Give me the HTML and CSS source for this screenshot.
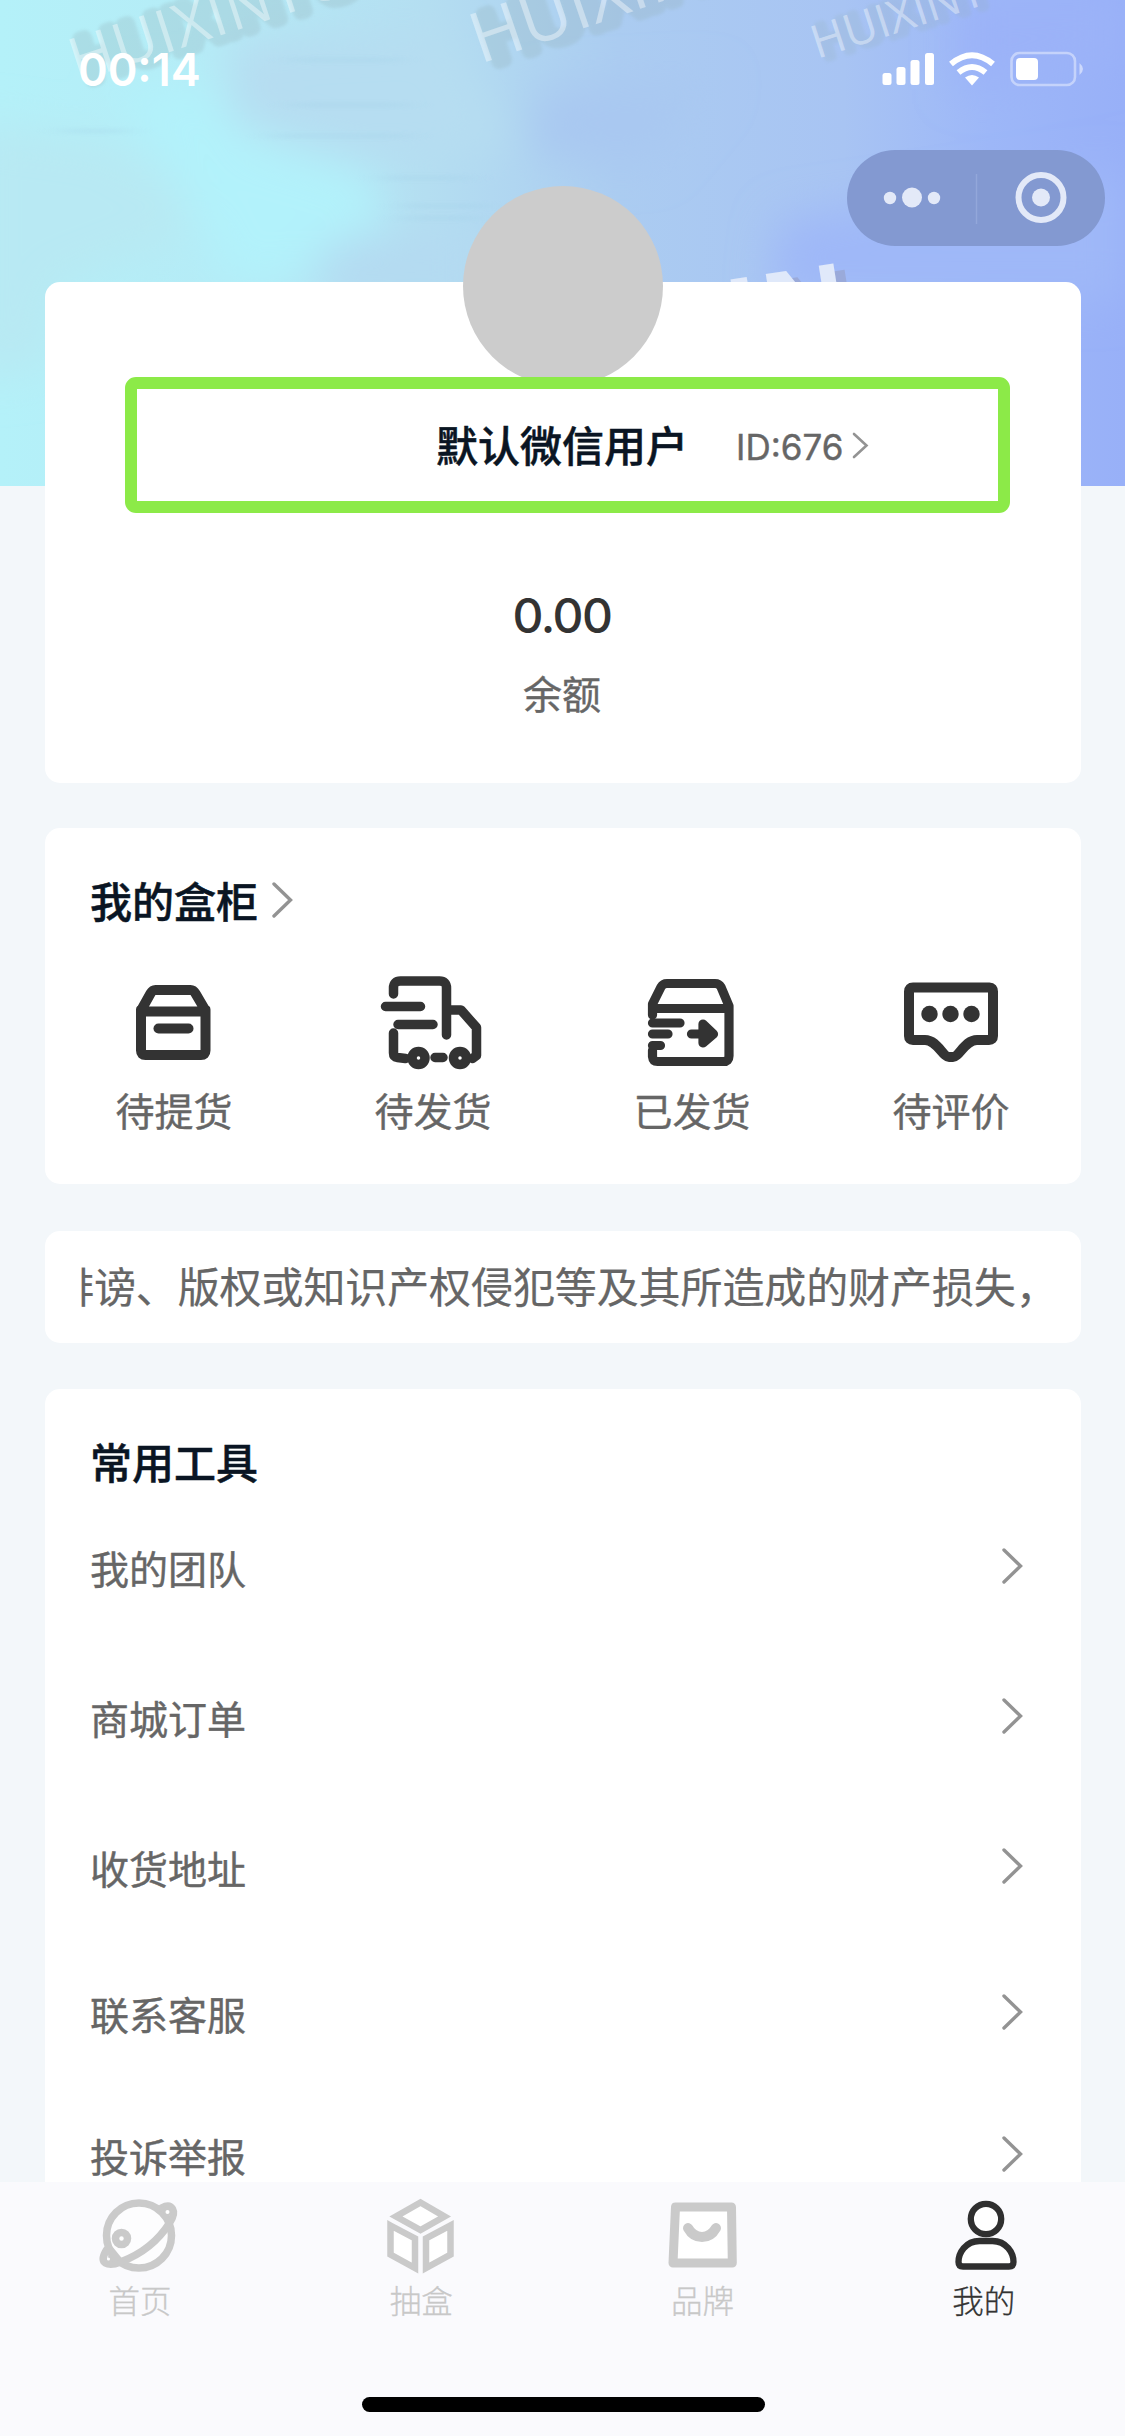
FILE: index.html
```html
<!DOCTYPE html>
<html lang="zh-CN">
<head>
<meta charset="utf-8">
<title>我的</title>
<link rel="stylesheet" href="styles.css">
</head>
<body>
<div class="page">
  <svg class="backdrop" viewBox="0 0 1125 486" aria-hidden="true">
    <defs>
      <linearGradient id="sky" x1="0" y1="0" x2="1" y2="0">
        <stop offset="0" stop-color="#b4f1f9"/>
        <stop offset=".2" stop-color="#b5ebf6"/>
        <stop offset=".38" stop-color="#b4def1"/>
        <stop offset=".55" stop-color="#abccf1"/>
        <stop offset=".75" stop-color="#a8c4f3"/>
        <stop offset=".88" stop-color="#9db7f8"/>
        <stop offset="1" stop-color="#98b0f8"/>
      </linearGradient>
      <filter id="soft" x="-50%" y="-50%" width="200%" height="200%"><feGaussianBlur stdDeviation="22"/></filter>
      <filter id="streak" x="-50%" y="-50%" width="200%" height="200%"><feGaussianBlur stdDeviation="14 2"/></filter>
      <filter id="shade" x="-20%" y="-40%" width="140%" height="180%"><feGaussianBlur stdDeviation="1.500"/></filter>
    </defs>
    <rect width="1125" height="486" fill="url(#sky)"/>
    <g filter="url(#soft)">
      <path d="M-30 120L110 140 190 190 190 240 60 290 50 370-30 380Z" fill="#b8e9f3"/>
      <path d="M110 90L210 80 250 140 370 175 385 220 320 280 230 290 180 190Z" fill="#b2f2fb"/>
      <path d="M230 40L440 30 520 150 370 160 230 120Z" fill="#b6ddf1"/>
      <path d="M310 260L350 235 480 235 480 300 330 300Z" fill="#b4daf1"/>
      <path d="M540 90L720 80 650 165 530 155Z" fill="#a9c8f1"/>
      <path d="M780 220L1125 170V300H770Z" fill="#9fb8f8"/>
      <path d="M960 0H1125V60L960 90Z" fill="#9bb2f8"/>
    </g>
    <g class="streaks" filter="url(#streak)">
      <path d="M60 131h70M270 136h140M290 60h110M290 105h120M380 178h90M400 206h90M400 218h80"/>
    </g>
    <g class="wordmark">
      <g transform="translate(77 82) rotate(-18)">
        <text class="depth" x="10" y="3" font-size="60" letter-spacing="1.500">HUIXINTC</text>
        <text x="0" y="0" font-size="60" letter-spacing="1.500">HUIXINTC</text>
      </g>
      <g transform="translate(480 64) rotate(-19)">
        <text class="depth" x="12" y="4" font-size="70">HUIXIN</text>
        <text x="0" y="0" font-size="70">HUIXIN</text>
      </g>
      <g transform="translate(817 59) rotate(-18)">
        <text class="depth thin" x="7" y="2" font-size="46">HUIXINT</text>
        <text x="0" y="0" font-size="46">HUIXINT</text>
      </g>
      <g class="front" transform="translate(855 338) rotate(-9)">
        <text class="front-depth" x="10" y="8" font-size="108">IN</text>
        <text x="0" y="0" font-size="108">IN</text>
      </g>
    </g>
  </svg>

  <header class="status">
    <time class="clock">00:14</time>
    <svg class="signals" viewBox="880 50 206 38" aria-hidden="true">
      <g fill="#fff">
        <rect x="882.5" y="73" width="9" height="12" rx="2.5"/>
        <rect x="896.5" y="67" width="9" height="18" rx="2.5"/>
        <rect x="910.5" y="60" width="9" height="25" rx="2.5"/>
        <rect x="925" y="53" width="9" height="32" rx="2.5"/>
        <path d="M972 85.500L965 77.500Q972 72.500 979 77.500Z"/>
      </g>
      <g fill="none" stroke="#fff" stroke-width="6">
        <path d="M951 64Q972 46.500 993 64"/>
        <path d="M958.500 72.500Q972 61.500 985.500 72.500"/>
      </g>
      <rect x="1011.500" y="53" width="63.500" height="32" rx="8" fill="none" stroke="#fff" stroke-opacity=".42" stroke-width="2.600"/>
      <rect x="1016" y="58" width="22" height="22" rx="4" fill="#fff"/>
      <path d="M1079.500 63Q1083 66 1083 69T1079.500 75Z" fill="#fff" opacity=".5"/>
    </svg>
  </header>

  <nav class="capsule-row">
    <div class="capsule">
      <svg viewBox="847 150 258 96" aria-hidden="true">
        <g fill="#e3e9f8"><circle cx="890" cy="198" r="6.200"/><circle cx="912" cy="197.500" r="10"/><circle cx="934" cy="198" r="6.200"/><circle cx="1041" cy="197.500" r="9"/></g>
        <circle cx="1041" cy="197.500" r="22.500" fill="none" stroke="#e3e9f8" stroke-width="6"/>
        <path d="M976.500 174v50" stroke="#93a7da" stroke-width="1.500"/>
      </svg>
    </div>
  </nav>

  <main class="content">
    <section class="card profile">
      <div class="avatar"></div>
      <div class="identity">
        <span class="name">默认微信用户</span>
        <span class="uid">ID:676</span>
        <svg class="chev chev-s" viewBox="0 0 17 27"><path d="M2 2l12.500 11.500L2 25"/></svg>
      </div>
      <div class="amount">0.00</div>
      <div class="amount-label">余额</div>
    </section>

    <section class="card cabinet">
      <h2 class="title">我的盒柜 <svg class="chev" viewBox="0 0 21 36"><path d="M2 2l16.500 16L2 34"/></svg></h2>
      <div class="shortcuts">
        <div class="shortcut">
          <svg viewBox="115 970 120 104"><g class="ink">
            <path d="M142 1009.500v41q0 4.500 4.500 4.500h55.500q4.500 0 4.500-4.500v-41M142 1011.500h64.500M142 1010.500l9.500-17q2-3.500 5-3.500h35q3 0 5 3.500l10 17"/>
            <path d="M159.500 1028.500h30"/></g></svg>
          <span>待提货</span>
        </div>
        <div class="shortcut">
          <svg viewBox="374 970 120 104"><g class="ink truck">
            <path d="M394.500 994v-6q0-7 7-7h39q7 0 7 7v47M386.500 1006.500h35M399 1024.500h35M394.500 1033v20q0 4 4 4.500l8 1M447.500 1010h14.500l15.500 17.500v28l-4 3M436 1057.500h8"/></g>
            <g class="wheel"><circle cx="419.500" cy="1058" r="6.500"/><circle cx="461" cy="1058" r="6.500"/></g></svg>
          <span>待发货</span>
        </div>
        <div class="shortcut">
          <svg viewBox="633 970 120 104"><g class="ink sent">
            <path d="M653.500 1015v-11l8.500-17q2-3.500 6-3.500h48q4 0 6 3.500l8 19v50q0 5.500-5.500 5.500h-66q-4.500 0-5-5v-6M653.500 1008.500h76"/>
            <path d="M653.500 1023h27.500M653.500 1034h15.500M653.500 1045.500h8M692.500 1034h15"/>
            <path d="M704 1024l10.500 10-10.500 9z" fill="#333"/></g></svg>
          <span>已发货</span>
        </div>
        <div class="shortcut">
          <svg viewBox="892 970 120 104"><g class="ink">
            <path d="M914 987.500H990.500Q994 987.500 994 991.500V1036Q994 1040 990 1040H978C966 1040 960 1057 954 1057H950C944 1057 938 1040 926 1040H914Q910 1040 910 1036V991.500Q910 987.500 914 987.500Z"/></g>
            <g fill="#333"><circle cx="930.500" cy="1014" r="8.200"/><circle cx="951.500" cy="1014" r="8.200"/><circle cx="972.500" cy="1014" r="8.200"/></g></svg>
          <span>待评价</span>
        </div>
      </div>
    </section>

    <section class="card notice">
      <div class="marquee"><span>诽谤、版权或知识产权侵犯等及其所造成的财产损失，</span></div>
    </section>

    <section class="card tools">
      <h2 class="title">常用工具</h2>
      <ul class="list">
        <li>我的团队<svg class="chev" viewBox="0 0 21 36"><path d="M2 2l16.500 16L2 34"/></svg></li>
        <li>商城订单<svg class="chev" viewBox="0 0 21 36"><path d="M2 2l16.500 16L2 34"/></svg></li>
        <li>收货地址<svg class="chev" viewBox="0 0 21 36"><path d="M2 2l16.500 16L2 34"/></svg></li>
        <li class="short">联系客服<svg class="chev" viewBox="0 0 21 36"><path d="M2 2l16.500 16L2 34"/></svg></li>
        <li class="short">投诉举报<svg class="chev" viewBox="0 0 21 36"><path d="M2 2l16.500 16L2 34"/></svg></li>
      </ul>
    </section>
  </main>

  <footer class="tabbar">
    <div class="tabs">
      <div class="tab">
        <svg viewBox="95.500 2194 90 84"><g fill="none" stroke="#cacaca" stroke-width="7.500" stroke-linecap="round" stroke-linejoin="round">
          <circle cx="139.500" cy="2235.500" r="32.500" fill="#fdfdfe"/>
          <path d="M162 2208q8-4 11 1t-3 14q-17 27-49 39-10 4-15 1t1-13"/></g>
          <circle cx="122" cy="2238.500" r="6" fill="#fff" stroke="#cacaca" stroke-width="7.500"/>
          <path d="M110 2243l13 16-15 4z" fill="#cacaca"/><path d="M160 2206l8 14 5-11z" fill="#cacaca"/>
          <circle cx="168" cy="2212" r="2" fill="#fff"/><circle cx="109" cy="2259" r="1.500" fill="#fff"/></svg>
        <span>首页</span>
      </div>
      <div class="tab">
        <svg viewBox="377 2194 90 84"><g fill="#fff" stroke="#cacaca" stroke-width="6.500">
          <path d="M421.500 2202.500L445.500 2216.500 421.500 2230 397 2216.500Z"/>
          <path d="M391.500 2225.500L416 2238.500V2268L391.500 2254.500Z"/>
          <path d="M451.500 2225.500V2254.500L427 2268V2238.500Z"/></g></svg>
        <span>抽盒</span>
      </div>
      <div class="tab">
        <svg viewBox="658.500 2194 90 84"><g stroke="#cacaca" fill="none" stroke-linejoin="round">
          <path d="M676 2207h56l.8 56h-59.300z" fill="#fff" stroke-width="9"/>
          <path d="M688.500 2228q5 9 14 9t14-9" stroke-width="10" stroke-linecap="round"/></g></svg>
        <span>品牌</span>
      </div>
      <div class="tab active">
        <svg viewBox="939.500 2194 90 84"><g fill="#fff" stroke="#2f2f2f" stroke-width="6.300">
          <circle cx="986.500" cy="2219" r="15.200"/>
          <path d="M980 2241h13c14 0 21 12 21 21q0 4.500-4.500 4.500h-46q-4.500 0-4.500-4.500c0-9 7-21 21-21z"/></g></svg>
        <span>我的</span>
      </div>
    </div>
    <div class="home-indicator"></div>
  </footer>
</div>
</body>
</html>
```
FILE: styles.css
```css
* { box-sizing: border-box; margin: 0; padding: 0; }

body {
  font-family: Inter, "Noto Sans CJK SC", sans-serif;
  background: #f3f7fa;
  color: #666;
}

svg { display: block; flex: none; }

.page {
  position: relative;
  width: 1125px;
  height: 2436px;
  display: flex;
  flex-direction: column;
  overflow: hidden;
}

.backdrop { position: absolute; left: 0; top: 0; width: 1125px; height: 486px; }
.streaks { fill: none; stroke: #9fcfe6; stroke-width: 3; opacity: .4; }
.wordmark text { font-family: "Open Sans", sans-serif; font-weight: 400; fill: #fff; fill-opacity: .4; }
.wordmark .depth {
  fill: #93b0b8;
  stroke: #93b0b8;
  stroke-width: 15;
  stroke-linejoin: round;
  fill-opacity: 1;
  opacity: .27;
  filter: url(#shade);
}
.wordmark .thin { stroke-width: 9; opacity: .2; }
.wordmark .front text { font-weight: 700; fill: #e0e9fa; fill-opacity: 1; text-anchor: end; }
.wordmark .front .front-depth { fill: #9aaada; }

/* Status bar and mini-program capsule */
.status, .capsule-row, .content { position: relative; }
.status {
  height: 150px;
  padding: 50px 39px 0 78px;
  display: flex;
  justify-content: space-between;
  align-items: flex-start;
}
.clock { color: #fff; font-size: 45px; font-weight: 600; line-height: 40px; }
.signals { width: 206px; height: 38px; }
.capsule-row { display: flex; justify-content: flex-end; padding-right: 20px; height: 132px; }
.capsule { width: 258px; height: 96px; border-radius: 48px; background: #8399d1; }

.content {
  flex: 1;
  min-height: 0;
  overflow: visible;
  padding: 0 44px 0 45px;
}
.card { background: #fff; border-radius: 15px; }

/* Profile */
.profile { position: relative; height: 501px; padding: 95px 71px 0 80px; margin-bottom: 45px; text-align: center; }
.avatar {
  position: absolute;
  left: 418px;
  top: -96px;
  width: 200px;
  height: 200px;
  border-radius: 50%;
  background: #ccc;
}
.identity {
  position: relative;
  height: 136px;
  border: 12px solid #8cea48;
  border-radius: 11px;
  background: #fff;
  display: flex;
  align-items: center;
  padding: 3px 0 0 299px;
}
.name { font-size: 42px; font-weight: 500; color: #0a1523; line-height: 60px; -webkit-text-stroke: .5px #0a1523; }
.uid { font-size: 35px; line-height: 60px; margin-left: 48px; -webkit-text-stroke: .4px #666; }
.chev { width: 21px; height: 36px; fill: none; stroke: #939393; stroke-width: 3.400; stroke-linecap: round; }
.chev-s { width: 17px; height: 27px; margin-left: 9px; margin-top: -3px; stroke-width: 2.600; }
.amount { margin: 75px 11px 28px 0; font-size: 48px; font-weight: 500; line-height: 56px; letter-spacing: -1.500px; color: #333; }
.amount-label { margin-right: 11px; font-size: 39px; line-height: 46px; -webkit-text-stroke: .4px #666; }

/* Cabinet */
.cabinet { height: 356px; margin-bottom: 47px; padding-top: 45px; }
.title {
  display: flex;
  align-items: center;
  gap: 14px;
  padding-left: 45px;
  font-size: 42px;
  font-weight: 500;
  line-height: 62px;
  height: 60px;
  color: #0a1523;
  -webkit-text-stroke: .5px #0a1523;
}
.title .chev { margin-top: -6px; }
.shortcuts { display: grid; grid-template-columns: repeat(4, 1fr); padding-top: 37px; }
.shortcut {
  display: flex;
  flex-direction: column;
  align-items: center;
  gap: 15px;
  margin-left: -1px;
  font-size: 39px;
  line-height: 46px;
  -webkit-text-stroke: .4px #666;
}
.shortcut svg { width: 120px; height: 104px; }
.ink { fill: none; stroke: #333; stroke-width: 10; stroke-linecap: round; stroke-linejoin: round; }
.truck { stroke-width: 9.500; }
.sent { stroke-width: 9.200; }
.wheel { fill: #fff; stroke: #333; stroke-width: 9.500; }

/* Scrolling notice */
.notice { height: 112px; margin-bottom: 46px; padding: 2px 35px 0 36px; display: flex; align-items: center; }
.marquee { overflow: hidden; white-space: nowrap; height: 60px; line-height: 60px; font-size: 42px; width: 965px; }
.marquee span { display: block; margin-left: -29px; letter-spacing: -.1px; -webkit-text-stroke: .2px #666; }

/* Tools */
.tools { height: 840px; padding-top: 45px; }
.list { list-style: none; padding: 0 58px 0 45px; }
.list li {
  height: 150px;
  padding-bottom: 5px;
  display: flex;
  align-items: center;
  justify-content: space-between;
  font-size: 39px;
  -webkit-text-stroke: .4px #666;
}
.list li.short { height: 142px; }
.list .chev { margin-top: -1px; }

/* Bottom tabs */
.tabbar {
  position: relative;
  height: 254px;
  flex: none;
  background: #fafafd;
  display: flex;
  flex-direction: column;
  align-items: center;
}
.tabs { display: grid; grid-template-columns: repeat(4, 1fr); width: 1125px; height: 215px; padding-top: 12px; }
.tab {
  display: flex;
  flex-direction: column;
  align-items: center;
  gap: 6px;
  margin-left: -1px;
  font-size: 31.500px;
  line-height: 36px;
  font-weight: 300;
  color: #c8c8c8;
  -webkit-text-stroke: .3px currentColor;
}
.tab svg { width: 90px; height: 84px; }
.tab.active { color: #333; }
.home-indicator { width: 403px; height: 15px; margin-left: 2px; border-radius: 8px; background: #000; }
```
